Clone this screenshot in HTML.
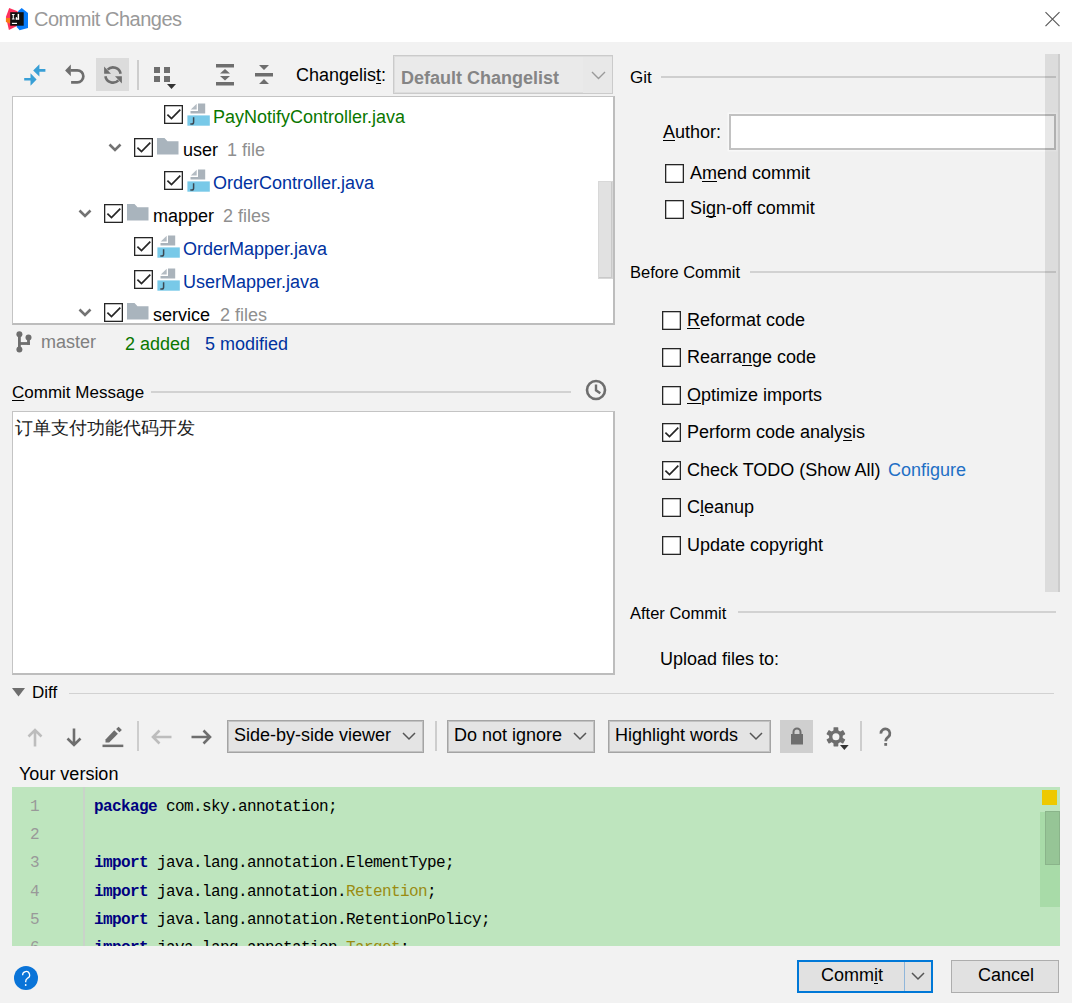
<!DOCTYPE html>
<html><head><meta charset="utf-8"><title>Commit Changes</title>
<style>
html,body{margin:0;padding:0}
body{width:1072px;height:1003px;position:relative;overflow:hidden;background:#f2f2f2;font-family:"Liberation Sans",sans-serif;font-size:18px}
.a{position:absolute;white-space:nowrap}
svg.a{overflow:visible}
u{text-decoration:underline;text-decoration-skip-ink:none;text-underline-offset:2px;text-decoration-thickness:1px}
b{font-weight:700}
</style></head><body>
<div class="a" style="left:0px;top:0px;width:1072px;height:42px;background:#fff"></div>
<svg class="a" style="left:2px;top:4px" width="30" height="30" viewBox="0 0 30 30"><path d="M7.2 3.9 L15.6 7.2 L15 22 L6.9 26 L3.9 12.9 Z" fill="#fe315d"/><path d="M3.9 14 L8.4 14 L8.4 19.7 L3.9 18 Z" fill="#f97a12"/><path d="M16.2 6.9 L19.7 3.9 L26 9 L26 24 L17.6 26.3 L14.7 23 Z" fill="#087cfa"/><rect x="8.2" y="8.2" width="13.5" height="13.5" fill="#111"/><rect x="9.9" y="18.8" width="5.1" height="1.2" fill="#fff"/><path d="M9.9 9.9 H12.6 V10.9 H11.8 V14.6 H12.6 V15.6 H9.9 V14.6 H10.7 V10.9 H9.9 Z" fill="#fff"/><rect x="15.6" y="9.9" width="1.5" height="5.7" fill="#fff"/><rect x="13.8" y="14.4" width="3.3" height="1.2" fill="#fff"/><rect x="13.8" y="13.2" width="1.2" height="2.4" fill="#fff"/></svg>
<div class="a" style="left:34px;top:8px;font-size:20px;line-height:22px;color:#999999;font-weight:400;font-family:'Liberation Sans';letter-spacing:-0.5px">Commit Changes</div>
<svg class="a" style="left:1044px;top:11px" width="17" height="17" viewBox="0 0 17 17"><path d="M1.5 1.2 L15.5 15.2 M15.5 1.2 L1.5 15.2" stroke="#5a5a5a" stroke-width="1.15"/></svg>
<svg class="a" style="left:24px;top:64px" width="22" height="22" viewBox="0 0 22 22"><path d="M9.2 6.5 L15.4 0.2 L15.4 5 L21.4 5 L21.4 7.7 L15.4 7.7 L15.4 12.5 Z" fill="#389fd6"/><path d="M12.6 15.4 L6.5 9.2 L6.5 13.9 L0.2 13.9 L0.2 16.6 L6.5 16.6 L6.5 21.7 Z" fill="#389fd6"/></svg>
<svg class="a" style="left:65px;top:65px" width="20" height="20" viewBox="0 0 20 20"><path d="M5.5 5.3 H12.3 A6.05 6.05 0 0 1 12.3 17.4 H6.1" stroke="#6e6e6e" stroke-width="2.7" fill="none"/><path d="M0.1 5.5 L5.8 -0.5 L5.8 11.2 Z" fill="#6e6e6e"/></svg>
<div class="a" style="left:96px;top:58px;width:33px;height:33px;background:#dcdcdc"></div>
<svg class="a" style="left:103px;top:65px" width="20" height="20" viewBox="0 0 20 20"><path d="M17.6 8.8 A7.7 7.7 0 0 0 4.6 4.6" stroke="#6e6e6e" stroke-width="2.6" fill="none"/><path d="M1.1 1.6 L1.1 8.8 L8 8.8 Z" fill="#6e6e6e"/><path d="M2.4 11.2 A7.7 7.7 0 0 0 15.4 15.4" stroke="#6e6e6e" stroke-width="2.6" fill="none"/><path d="M18.9 18.4 L18.9 11.2 L12 11.2 Z" fill="#6e6e6e"/></svg>
<div class="a" style="left:137px;top:60px;width:2px;height:30px;background:#cdcdcd"></div>
<svg class="a" style="left:154px;top:67px" width="24" height="24" viewBox="0 0 24 24"><rect x="0" y="0" width="6" height="6" fill="#6e6e6e"/><rect x="10" y="0" width="6" height="6" fill="#6e6e6e"/><rect x="0" y="9" width="6" height="6" fill="#6e6e6e"/><rect x="10" y="9" width="6" height="6" fill="#6e6e6e"/><path d="M13 17 L22 17 L17.5 22 Z" fill="#333"/></svg>
<svg class="a" style="left:216px;top:64px" width="18" height="22" viewBox="0 0 18 22"><rect x="0" y="0" width="18" height="3.5" fill="#6e6e6e"/><rect x="0" y="18" width="18" height="3.5" fill="#6e6e6e"/><path d="M4 9.5 L9 5 L14 9.5 Z M4 12 L9 16.5 L14 12 Z" fill="#6e6e6e"/></svg>
<svg class="a" style="left:255px;top:65px" width="18" height="20" viewBox="0 0 18 20"><rect x="0" y="8" width="18" height="3.5" fill="#6e6e6e"/><path d="M4 0 L14 0 L9 5 Z M4 19 L14 19 L9 14 Z" fill="#6e6e6e"/></svg>
<div class="a" style="left:296px;top:65px;font-size:18px;line-height:20px;color:#000;font-weight:400;font-family:'Liberation Sans';">Changelis<u>t</u>:</div>
<div class="a" style="left:393px;top:55px;width:220px;height:39px;background:#eaeaea;border:1px solid #cbcbcb;box-shadow:inset 0 0 0 1px #dddddd;box-sizing:border-box"></div>
<div class="a" style="left:583px;top:57px;width:29px;height:36px;background:#e8e8e8"></div>
<div class="a" style="left:401px;top:68px;font-size:18px;line-height:20px;color:#858585;font-weight:700;font-family:'Liberation Sans';">Default Changelist</div>
<svg class="a" style="left:591px;top:71px" width="15" height="9" viewBox="0 0 15 9"><path d="M1 1 L7.5 7.5 L14 1" stroke="#9a9a9a" stroke-width="1.4" fill="none"/></svg>
<div class="a" style="left:12px;top:96px;width:603px;height:229px;background:#fff;border-left:1px solid #c4c4c4;border-top:1px solid #c4c4c4;border-right:2px solid #bdbdbd;border-bottom:2px solid #bdbdbd;box-sizing:border-box"></div>
<div class="a" style="left:13px;top:97px;width:600px;height:226px;overflow:hidden">
<svg class="a" style="left:151px;top:8px" width="19" height="19" viewBox="0 0 19 19"><rect x="0.65" y="0.65" width="17.7" height="17.7" fill="#fff" stroke="#262626" stroke-width="1.3"/><path d="M3.4 9.6 L7.5 13.6 L16.3 4.7" stroke="#262626" stroke-width="1.7" fill="none"/></svg>
<svg class="a" style="left:174px;top:6px" width="23" height="23" viewBox="0 0 23 23"><path d="M3.8 6.5 L9.7 0.8 L9.7 6.5 Z" fill="#b4bcc3"/><path d="M11 0.6 H18.2 V10.6 H3.5 V8 H11 Z" fill="#aab3bb"/><rect x="0.4" y="12.4" width="22.4" height="10.3" fill="#78c9e8"/><path d="M6.6 14.2 V19.2 Q6.6 21 4.8 21 H3.3" stroke="#3d4852" stroke-width="1.5" fill="none"/></svg>
<div class="a" style="left:200px;top:10px;font-size:18px;line-height:20px;color:#0a7700;font-weight:400;font-family:'Liberation Sans';">PayNotifyController.java</div>
<svg class="a" style="left:95px;top:46px" width="14" height="9" viewBox="0 0 14 9"><path d="M1.5 1.5 L7 7 L12.5 1.5" stroke="#737373" stroke-width="2.6" fill="none"/></svg>
<svg class="a" style="left:121px;top:41px" width="19" height="19" viewBox="0 0 19 19"><rect x="0.65" y="0.65" width="17.7" height="17.7" fill="#fff" stroke="#262626" stroke-width="1.3"/><path d="M3.4 9.6 L7.5 13.6 L16.3 4.7" stroke="#262626" stroke-width="1.7" fill="none"/></svg>
<svg class="a" style="left:144px;top:41px" width="22" height="17" viewBox="0 0 22 17"><path d="M0 0 H7.5 L10.5 3.2 H21.5 V16.5 H0 Z" fill="#a9b4bd"/></svg>
<div class="a" style="left:170px;top:43px;font-size:18px;line-height:20px;color:#000;font-weight:400;font-family:'Liberation Sans';">user</div>
<div class="a" style="left:214px;top:43px;font-size:18px;line-height:20px;color:#8f8f8f;font-weight:400;font-family:'Liberation Sans';">1 file</div>
<svg class="a" style="left:151px;top:74px" width="19" height="19" viewBox="0 0 19 19"><rect x="0.65" y="0.65" width="17.7" height="17.7" fill="#fff" stroke="#262626" stroke-width="1.3"/><path d="M3.4 9.6 L7.5 13.6 L16.3 4.7" stroke="#262626" stroke-width="1.7" fill="none"/></svg>
<svg class="a" style="left:174px;top:72px" width="23" height="23" viewBox="0 0 23 23"><path d="M3.8 6.5 L9.7 0.8 L9.7 6.5 Z" fill="#b4bcc3"/><path d="M11 0.6 H18.2 V10.6 H3.5 V8 H11 Z" fill="#aab3bb"/><rect x="0.4" y="12.4" width="22.4" height="10.3" fill="#78c9e8"/><path d="M6.6 14.2 V19.2 Q6.6 21 4.8 21 H3.3" stroke="#3d4852" stroke-width="1.5" fill="none"/></svg>
<div class="a" style="left:200px;top:76px;font-size:18px;line-height:20px;color:#0032a0;font-weight:400;font-family:'Liberation Sans';">OrderController.java</div>
<svg class="a" style="left:65px;top:112px" width="14" height="9" viewBox="0 0 14 9"><path d="M1.5 1.5 L7 7 L12.5 1.5" stroke="#737373" stroke-width="2.6" fill="none"/></svg>
<svg class="a" style="left:91px;top:107px" width="19" height="19" viewBox="0 0 19 19"><rect x="0.65" y="0.65" width="17.7" height="17.7" fill="#fff" stroke="#262626" stroke-width="1.3"/><path d="M3.4 9.6 L7.5 13.6 L16.3 4.7" stroke="#262626" stroke-width="1.7" fill="none"/></svg>
<svg class="a" style="left:114px;top:107px" width="22" height="17" viewBox="0 0 22 17"><path d="M0 0 H7.5 L10.5 3.2 H21.5 V16.5 H0 Z" fill="#a9b4bd"/></svg>
<div class="a" style="left:140px;top:109px;font-size:18px;line-height:20px;color:#000;font-weight:400;font-family:'Liberation Sans';">mapper</div>
<div class="a" style="left:210px;top:109px;font-size:18px;line-height:20px;color:#8f8f8f;font-weight:400;font-family:'Liberation Sans';">2 files</div>
<svg class="a" style="left:121px;top:140px" width="19" height="19" viewBox="0 0 19 19"><rect x="0.65" y="0.65" width="17.7" height="17.7" fill="#fff" stroke="#262626" stroke-width="1.3"/><path d="M3.4 9.6 L7.5 13.6 L16.3 4.7" stroke="#262626" stroke-width="1.7" fill="none"/></svg>
<svg class="a" style="left:144px;top:138px" width="23" height="23" viewBox="0 0 23 23"><path d="M3.8 6.5 L9.7 0.8 L9.7 6.5 Z" fill="#b4bcc3"/><path d="M11 0.6 H18.2 V10.6 H3.5 V8 H11 Z" fill="#aab3bb"/><rect x="0.4" y="12.4" width="22.4" height="10.3" fill="#78c9e8"/><path d="M6.6 14.2 V19.2 Q6.6 21 4.8 21 H3.3" stroke="#3d4852" stroke-width="1.5" fill="none"/></svg>
<div class="a" style="left:170px;top:142px;font-size:18px;line-height:20px;color:#0032a0;font-weight:400;font-family:'Liberation Sans';">OrderMapper.java</div>
<svg class="a" style="left:121px;top:173px" width="19" height="19" viewBox="0 0 19 19"><rect x="0.65" y="0.65" width="17.7" height="17.7" fill="#fff" stroke="#262626" stroke-width="1.3"/><path d="M3.4 9.6 L7.5 13.6 L16.3 4.7" stroke="#262626" stroke-width="1.7" fill="none"/></svg>
<svg class="a" style="left:144px;top:171px" width="23" height="23" viewBox="0 0 23 23"><path d="M3.8 6.5 L9.7 0.8 L9.7 6.5 Z" fill="#b4bcc3"/><path d="M11 0.6 H18.2 V10.6 H3.5 V8 H11 Z" fill="#aab3bb"/><rect x="0.4" y="12.4" width="22.4" height="10.3" fill="#78c9e8"/><path d="M6.6 14.2 V19.2 Q6.6 21 4.8 21 H3.3" stroke="#3d4852" stroke-width="1.5" fill="none"/></svg>
<div class="a" style="left:170px;top:175px;font-size:18px;line-height:20px;color:#0032a0;font-weight:400;font-family:'Liberation Sans';">UserMapper.java</div>
<svg class="a" style="left:65px;top:211px" width="14" height="9" viewBox="0 0 14 9"><path d="M1.5 1.5 L7 7 L12.5 1.5" stroke="#737373" stroke-width="2.6" fill="none"/></svg>
<svg class="a" style="left:91px;top:206px" width="19" height="19" viewBox="0 0 19 19"><rect x="0.65" y="0.65" width="17.7" height="17.7" fill="#fff" stroke="#262626" stroke-width="1.3"/><path d="M3.4 9.6 L7.5 13.6 L16.3 4.7" stroke="#262626" stroke-width="1.7" fill="none"/></svg>
<svg class="a" style="left:114px;top:206px" width="22" height="17" viewBox="0 0 22 17"><path d="M0 0 H7.5 L10.5 3.2 H21.5 V16.5 H0 Z" fill="#a9b4bd"/></svg>
<div class="a" style="left:140px;top:208px;font-size:18px;line-height:20px;color:#000;font-weight:400;font-family:'Liberation Sans';">service</div>
<div class="a" style="left:207px;top:208px;font-size:18px;line-height:20px;color:#8f8f8f;font-weight:400;font-family:'Liberation Sans';">2 files</div>
</div>
<div class="a" style="left:598px;top:181px;width:15px;height:98px;background:#e1e1e1;border:1px solid #d8d8d8;box-shadow:inset -1px -1px 0 #c9c9c9;box-sizing:border-box"></div>
<svg class="a" style="left:14px;top:330px" width="18" height="24" viewBox="0 0 18 24"><circle cx="5.4" cy="4.2" r="3" fill="#6e6e6e"/><circle cx="5.4" cy="19.4" r="3" fill="#6e6e6e"/><circle cx="14.5" cy="7.4" r="3" fill="#6e6e6e"/><rect x="4" y="4" width="2.8" height="15" fill="#6e6e6e"/><rect x="4" y="12.1" width="11.9" height="2.8" fill="#6e6e6e"/><rect x="13.1" y="7" width="2.8" height="7.9" fill="#6e6e6e"/></svg>
<div class="a" style="left:41px;top:332px;font-size:18px;line-height:20px;color:#808080;font-weight:400;font-family:'Liberation Sans';">master</div>
<div class="a" style="left:125px;top:334px;font-size:18px;line-height:20px;color:#0a7700;font-weight:400;font-family:'Liberation Sans';">2 added</div>
<div class="a" style="left:205px;top:334px;font-size:18px;line-height:20px;color:#0032a0;font-weight:400;font-family:'Liberation Sans';">5 modified</div>
<div class="a" style="left:12px;top:383px;font-size:17px;line-height:19px;color:#000;font-weight:400;font-family:'Liberation Sans';"><u>C</u>ommit Message</div>
<div class="a" style="left:151px;top:391px;width:420px;height:2px;background:#d2d2d2"></div>
<svg class="a" style="left:585px;top:379px" width="22" height="22" viewBox="0 0 22 22"><circle cx="11" cy="11" r="9" stroke="#6e6e6e" stroke-width="2.6" fill="none"/><path d="M11 5.5 V11.3 L15.3 14.3" stroke="#6e6e6e" stroke-width="2.4" fill="none"/></svg>
<div class="a" style="left:12px;top:411px;width:603px;height:264px;background:#fff;border-left:1px solid #c4c4c4;border-top:1px solid #c4c4c4;border-right:2px solid #bdbdbd;border-bottom:2px solid #bdbdbd;box-sizing:border-box"></div>
<div class="a" style="left:15px;top:418px;font-size:18px;line-height:20px;color:#1a1a1a;font-weight:400;font-family:'Liberation Serif';">订单支付功能代码开发</div>
<div class="a" style="left:630px;top:68px;font-size:17px;line-height:19px;color:#000;font-weight:400;font-family:'Liberation Sans';">Git</div>
<div class="a" style="left:661px;top:76px;width:395px;height:2px;background:#cfcfcf"></div>
<div class="a" style="left:663px;top:122px;font-size:18px;line-height:20px;color:#000;font-weight:400;font-family:'Liberation Sans';"><u>A</u>uthor:</div>
<div class="a" style="left:729px;top:114px;width:327px;height:36px;background:#fff;border:2px solid #c2c2c2;box-sizing:border-box;box-shadow:0 0 0 1.5px #f8f8f8"></div>
<svg class="a" style="left:665px;top:164px" width="19" height="19" viewBox="0 0 19 19"><rect x="0.65" y="0.65" width="17.7" height="17.7" fill="#fff" stroke="#262626" stroke-width="1.3"/></svg>
<div class="a" style="left:690px;top:163px;font-size:18px;line-height:20px;color:#000;font-weight:400;font-family:'Liberation Sans';">A<u>m</u>end commit</div>
<svg class="a" style="left:665px;top:200px" width="19" height="19" viewBox="0 0 19 19"><rect x="0.65" y="0.65" width="17.7" height="17.7" fill="#fff" stroke="#262626" stroke-width="1.3"/></svg>
<div class="a" style="left:690px;top:198px;font-size:18px;line-height:20px;color:#000;font-weight:400;font-family:'Liberation Sans';">Si<u>g</u>n-off commit</div>
<div class="a" style="left:630px;top:263px;font-size:16.5px;line-height:18px;color:#000;font-weight:400;font-family:'Liberation Sans';">Before Commit</div>
<div class="a" style="left:750px;top:271px;width:306px;height:2px;background:#d2d2d2"></div>
<svg class="a" style="left:662px;top:311px" width="19" height="19" viewBox="0 0 19 19"><rect x="0.65" y="0.65" width="17.7" height="17.7" fill="#fff" stroke="#262626" stroke-width="1.3"/></svg>
<div class="a" style="left:687px;top:310px;font-size:18px;line-height:20px;color:#000;font-weight:400;font-family:'Liberation Sans';"><u>R</u>eformat code</div>
<svg class="a" style="left:662px;top:348px" width="19" height="19" viewBox="0 0 19 19"><rect x="0.65" y="0.65" width="17.7" height="17.7" fill="#fff" stroke="#262626" stroke-width="1.3"/></svg>
<div class="a" style="left:687px;top:347px;font-size:18px;line-height:20px;color:#000;font-weight:400;font-family:'Liberation Sans';">Rearra<u>n</u>ge code</div>
<svg class="a" style="left:662px;top:386px" width="19" height="19" viewBox="0 0 19 19"><rect x="0.65" y="0.65" width="17.7" height="17.7" fill="#fff" stroke="#262626" stroke-width="1.3"/></svg>
<div class="a" style="left:687px;top:385px;font-size:18px;line-height:20px;color:#000;font-weight:400;font-family:'Liberation Sans';"><u>O</u>ptimize imports</div>
<svg class="a" style="left:662px;top:423px" width="19" height="19" viewBox="0 0 19 19"><rect x="0.65" y="0.65" width="17.7" height="17.7" fill="#fff" stroke="#262626" stroke-width="1.3"/><path d="M3.4 9.6 L7.5 13.6 L16.3 4.7" stroke="#262626" stroke-width="1.7" fill="none"/></svg>
<div class="a" style="left:687px;top:422px;font-size:18px;line-height:20px;color:#000;font-weight:400;font-family:'Liberation Sans';">Perform code analy<u>s</u>is</div>
<svg class="a" style="left:662px;top:461px" width="19" height="19" viewBox="0 0 19 19"><rect x="0.65" y="0.65" width="17.7" height="17.7" fill="#fff" stroke="#262626" stroke-width="1.3"/><path d="M3.4 9.6 L7.5 13.6 L16.3 4.7" stroke="#262626" stroke-width="1.7" fill="none"/></svg>
<div class="a" style="left:687px;top:460px;font-size:18px;line-height:20px;color:#000;font-weight:400;font-family:'Liberation Sans';">Check TODO (Show All)</div>
<svg class="a" style="left:662px;top:498px" width="19" height="19" viewBox="0 0 19 19"><rect x="0.65" y="0.65" width="17.7" height="17.7" fill="#fff" stroke="#262626" stroke-width="1.3"/></svg>
<div class="a" style="left:687px;top:497px;font-size:18px;line-height:20px;color:#000;font-weight:400;font-family:'Liberation Sans';">C<u>l</u>eanup</div>
<svg class="a" style="left:662px;top:536px" width="19" height="19" viewBox="0 0 19 19"><rect x="0.65" y="0.65" width="17.7" height="17.7" fill="#fff" stroke="#262626" stroke-width="1.3"/></svg>
<div class="a" style="left:687px;top:535px;font-size:18px;line-height:20px;color:#000;font-weight:400;font-family:'Liberation Sans';">Update copyright</div>
<div class="a" style="left:630px;top:604px;font-size:16.5px;line-height:18px;color:#000;font-weight:400;font-family:'Liberation Sans';">After Commit</div>
<div class="a" style="left:738px;top:611px;width:318px;height:2px;background:#d2d2d2"></div>
<div class="a" style="left:660px;top:649px;font-size:18px;line-height:20px;color:#000;font-weight:400;font-family:'Liberation Sans';">Upload files to:</div>
<div class="a" style="left:888px;top:460px;font-size:18px;line-height:20px;color:#1f6fc5;font-weight:400;font-family:'Liberation Sans';">Configure</div>
<div class="a" style="left:1045px;top:54px;width:15px;height:538px;background:rgba(0,0,0,0.09);border-right:2px solid rgba(0,0,0,0.07);box-sizing:border-box"></div>
<svg class="a" style="left:12px;top:688px" width="14" height="9" viewBox="0 0 14 9"><path d="M0 0 H13 L6.5 8.5 Z" fill="#6e6e6e"/></svg>
<div class="a" style="left:32px;top:683px;font-size:17px;line-height:19px;color:#000;font-weight:400;font-family:'Liberation Sans';">Diff</div>
<div class="a" style="left:69px;top:693px;width:985px;height:1px;background:#d2d2d2"></div>
<svg class="a" style="left:27px;top:728px" width="16" height="19" viewBox="0 0 16 19"><path d="M8 2 V18.5 M1.5 8.5 L8 2 L14.5 8.5" stroke="#bdbdbd" stroke-width="2.6" fill="none"/></svg>
<svg class="a" style="left:66px;top:728px" width="16" height="19" viewBox="0 0 16 19"><path d="M8 0.5 V17 M1.5 10.5 L8 17 L14.5 10.5" stroke="#6e6e6e" stroke-width="2.6" fill="none"/></svg>
<svg class="a" style="left:102px;top:726px" width="22" height="22" viewBox="0 0 22 22"><path d="M3.5 13.4 L12.3 4.2 L15.9 7.8 L7.2 16.6 L3.5 16.6 Z" fill="#6e6e6e"/><path d="M14.1 2.9 L16.6 0.8 L19.9 3.9 L17.4 6.3 Z" fill="#6e6e6e"/><rect x="0.5" y="18.6" width="20.8" height="2.5" fill="#6e6e6e"/></svg>
<div class="a" style="left:137px;top:721px;width:2px;height:30px;background:#cdcdcd"></div>
<svg class="a" style="left:151px;top:729px" width="21" height="16" viewBox="0 0 21 16"><path d="M2 8 H20.5 M8.5 1.5 L2 8 L8.5 14.5" stroke="#bdbdbd" stroke-width="2.6" fill="none"/></svg>
<svg class="a" style="left:191px;top:729px" width="21" height="16" viewBox="0 0 21 16"><path d="M0.5 8 H19 M12.5 1.5 L19 8 L12.5 14.5" stroke="#6e6e6e" stroke-width="2.6" fill="none"/></svg>
<div class="a" style="left:227px;top:720px;width:197px;height:33px;background:#e4e4e4;border:1px solid #a4a4a4;box-shadow:inset 0 0 0 1px #c2c2c2;box-sizing:border-box"></div>
<div class="a" style="left:234px;top:725px;font-size:18px;line-height:20px;color:#000;font-weight:400;font-family:'Liberation Sans';">Side-by-side viewer</div>
<svg class="a" style="left:402px;top:732px" width="14" height="9" viewBox="0 0 14 9"><path d="M1 1 L7 7 L13 1" stroke="#555" stroke-width="1.5" fill="none"/></svg>
<div class="a" style="left:435px;top:721px;width:2px;height:30px;background:#cdcdcd"></div>
<div class="a" style="left:447px;top:720px;width:148px;height:33px;background:#e4e4e4;border:1px solid #a4a4a4;box-shadow:inset 0 0 0 1px #c2c2c2;box-sizing:border-box"></div>
<div class="a" style="left:454px;top:725px;font-size:18px;line-height:20px;color:#000;font-weight:400;font-family:'Liberation Sans';">Do not ignore</div>
<svg class="a" style="left:573px;top:732px" width="14" height="9" viewBox="0 0 14 9"><path d="M1 1 L7 7 L13 1" stroke="#555" stroke-width="1.5" fill="none"/></svg>
<div class="a" style="left:608px;top:720px;width:163px;height:33px;background:#e4e4e4;border:1px solid #a4a4a4;box-shadow:inset 0 0 0 1px #c2c2c2;box-sizing:border-box"></div>
<div class="a" style="left:615px;top:725px;font-size:18px;line-height:20px;color:#000;font-weight:400;font-family:'Liberation Sans';">Highlight words</div>
<svg class="a" style="left:749px;top:732px" width="14" height="9" viewBox="0 0 14 9"><path d="M1 1 L7 7 L13 1" stroke="#555" stroke-width="1.5" fill="none"/></svg>
<div class="a" style="left:780px;top:720px;width:33px;height:33px;background:#cfcfcf"></div>
<svg class="a" style="left:790px;top:727px" width="14" height="18" viewBox="0 0 14 18"><path d="M3.5 7 V5 A3.5 3.5 0 0 1 10.5 5 V7" stroke="#6e6e6e" stroke-width="2" fill="none"/><rect x="1" y="7" width="12" height="10.5" fill="#6e6e6e"/></svg>
<svg class="a" style="left:825px;top:726px" width="25" height="24" viewBox="0 0 25 24"><g transform="translate(10.9,10.8)"><circle r="6.9" fill="#6e6e6e"/><g fill="#6e6e6e"><rect x="-2.4" y="-9.6" width="4.8" height="19.2" rx="0.6"/><rect x="-2.4" y="-9.6" width="4.8" height="19.2" rx="0.6" transform="rotate(60)"/><rect x="-2.4" y="-9.6" width="4.8" height="19.2" rx="0.6" transform="rotate(120)"/></g><circle r="3.5" fill="#f2f2f2"/></g><path d="M15 19 H23.7 L19.35 24 Z" fill="#333"/></svg>
<div class="a" style="left:860px;top:721px;width:2px;height:30px;background:#cdcdcd"></div>
<svg class="a" style="left:877px;top:726px" width="18" height="22" viewBox="0 0 18 22"><path d="M3.9 7.6 A4.5 4.5 0 1 1 11.3 10.9 Q8.7 12.6 8.7 15.3" stroke="#6e6e6e" stroke-width="2.7" fill="none"/><rect x="7.3" y="17" width="2.8" height="2.8" fill="#6e6e6e"/></svg>
<div class="a" style="left:19px;top:764px;font-size:18px;line-height:20px;color:#000;font-weight:400;font-family:'Liberation Sans';">Your version</div>
<div class="a" style="left:12px;top:787px;width:1048px;height:159px;background:#bee5be"></div>
<div class="a" style="left:83px;top:787px;width:2px;height:159px;background:#c9d3c9"></div>
<div class="a" style="left:12px;top:787px;width:1048px;height:159px;overflow:hidden">
<div class="a" style="left:18px;top:11px;font-size:16px;line-height:18px;color:#999;font-weight:400;font-family:'Liberation Mono';letter-spacing:-0.6px">1</div>
<div class="a" style="left:82px;top:11px;font-size:16px;line-height:18px;color:#000;font-weight:400;font-family:'Liberation Mono';letter-spacing:-0.6px;white-space:pre"><b style="color:#000080">package</b> com.sky.annotation;</div>
<div class="a" style="left:18px;top:39px;font-size:16px;line-height:18px;color:#999;font-weight:400;font-family:'Liberation Mono';letter-spacing:-0.6px">2</div>
<div class="a" style="left:82px;top:39px;font-size:16px;line-height:18px;color:#000;font-weight:400;font-family:'Liberation Mono';letter-spacing:-0.6px;white-space:pre"></div>
<div class="a" style="left:18px;top:67px;font-size:16px;line-height:18px;color:#999;font-weight:400;font-family:'Liberation Mono';letter-spacing:-0.6px">3</div>
<div class="a" style="left:82px;top:67px;font-size:16px;line-height:18px;color:#000;font-weight:400;font-family:'Liberation Mono';letter-spacing:-0.6px;white-space:pre"><b style="color:#000080">import</b> java.lang.annotation.ElementType;</div>
<div class="a" style="left:18px;top:96px;font-size:16px;line-height:18px;color:#999;font-weight:400;font-family:'Liberation Mono';letter-spacing:-0.6px">4</div>
<div class="a" style="left:82px;top:96px;font-size:16px;line-height:18px;color:#000;font-weight:400;font-family:'Liberation Mono';letter-spacing:-0.6px;white-space:pre"><b style="color:#000080">import</b> java.lang.annotation.<span style="color:#9a8c12">Retention</span>;</div>
<div class="a" style="left:18px;top:124px;font-size:16px;line-height:18px;color:#999;font-weight:400;font-family:'Liberation Mono';letter-spacing:-0.6px">5</div>
<div class="a" style="left:82px;top:124px;font-size:16px;line-height:18px;color:#000;font-weight:400;font-family:'Liberation Mono';letter-spacing:-0.6px;white-space:pre"><b style="color:#000080">import</b> java.lang.annotation.RetentionPolicy;</div>
<div class="a" style="left:18px;top:152px;font-size:16px;line-height:18px;color:#999;font-weight:400;font-family:'Liberation Mono';letter-spacing:-0.6px">6</div>
<div class="a" style="left:82px;top:152px;font-size:16px;line-height:18px;color:#000;font-weight:400;font-family:'Liberation Mono';letter-spacing:-0.6px;white-space:pre"><b style="color:#000080">import</b> java.lang.annotation.<span style="color:#9a8c12">Target</span>;</div>
</div>
<div class="a" style="left:1040px;top:812px;width:20px;height:95px;background:#a8dba8"></div>
<div class="a" style="left:1042px;top:790px;width:15px;height:15px;background:#eec900"></div>
<div class="a" style="left:1045px;top:811px;width:15px;height:54px;background:#96c596;border:1px solid #8ab48a;box-sizing:border-box"></div>
<svg class="a" style="left:14px;top:966px" width="24" height="24" viewBox="0 0 24 24"><circle cx="12" cy="12" r="12" fill="#0a74d8"/><path d="M8.6 9.2 A3.5 3.5 0 1 1 13.5 12.2 Q11.7 13.3 11.7 15.5 V16.2" stroke="#fff" stroke-width="1.3" fill="none"/><circle cx="11.7" cy="19" r="0.9" fill="#fff"/></svg>
<div class="a" style="left:797px;top:960px;width:136px;height:33px;background:#e1e1e1;border:2px solid #0078d7;box-sizing:border-box"></div>
<div class="a" style="left:904px;top:962px;width:1px;height:29px;background:#8fb6da"></div>
<div class="a" style="left:821px;top:965px;font-size:18px;line-height:20px;color:#000;font-weight:400;font-family:'Liberation Sans';">Comm<u>i</u>t</div>
<svg class="a" style="left:911px;top:972px" width="14" height="9" viewBox="0 0 14 9"><path d="M1 1 L7 7 L13 1" stroke="#555" stroke-width="1.5" fill="none"/></svg>
<div class="a" style="left:951px;top:960px;width:108px;height:33px;background:#e1e1e1;border:1px solid #adadad;box-sizing:border-box"></div>
<div class="a" style="left:978px;top:965px;font-size:18px;line-height:20px;color:#000;font-weight:400;font-family:'Liberation Sans';">Cancel</div>
</body></html>
